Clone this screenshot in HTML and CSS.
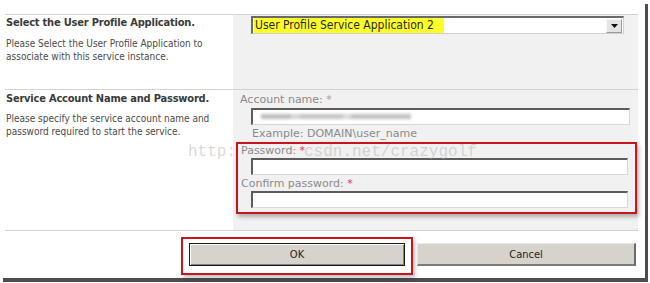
FILE: index.html
```html
<!DOCTYPE html>
<html>
<head>
<meta charset="utf-8">
<link rel="stylesheet" href="styles.css">
</head>
<body>
<div class="frame">
  <div class="top-space"></div>
  <div class="section s1">
    <div class="left">
      <div class="heading">Select the User Profile Application.</div>
      <div class="desc">Please Select the User Profile Application to<br>associate with this service instance.</div>
    </div>
    <div class="right">
      <div class="select">
        <span class="sel-text">User Profile Service Application 2</span>
        <span class="sel-btn"><svg width="7" height="4" viewBox="0 0 7 4"><path d="M0 0H7L3.5 4Z" fill="#111"/></svg></span>
      </div>
    </div>
  </div>
  <div class="section s2">
    <div class="left">
      <div class="heading">Service Account Name and Password.</div>
      <div class="desc">Please specify the service account name and<br>password required to start the service.</div>
    </div>
    <div class="right">
      <div class="label">Account name: <span class="star">*</span></div>
      <div class="input"><div class="blur"></div></div>
      <div class="example">Example: DOMAIN\user_name</div>
      <div class="redbox">
        <div class="label">Password: <span class="star red">*</span></div>
        <div class="input"></div>
        <div class="label l2">Confirm password: <span class="star red">*</span></div>
        <div class="input"></div>
      </div>
    </div>
  </div>
  <div class="buttons">
    <div class="okbox"><div class="btn ok">OK</div></div>
    <div class="btn cancel">Cancel</div>
  </div>
  <div class="watermark wm1">http:</div>
  <div class="watermark wm2">csdn.net/crazygolf</div>
</div>
</body>
</html>
```
FILE: styles.css
```css
html, body { margin: 0; padding: 0; background: #fff; }
body { width: 650px; height: 283px; overflow: hidden; font-family: "DejaVu Sans", Verdana, sans-serif; }
.frame {
  position: relative;
  width: 645px;
  height: 278px;
  background: #fff;
  box-shadow: 3px 4px 0 #4d4d4d;
  display: flex;
  flex-direction: column;
}
.top-space { height: 14px; }
.section {
  display: flex;
  margin: 0 7px 0 5px;
  border-top: 1px solid #d2d2d2;
}
.s1 { height: 74px; }
.s2 { height: 140px; border-bottom: 1px solid #d2d2d2; }
.left { width: 227px; padding-left: 1px; }
.right { flex: 1; background: #f1f1f1; }
.heading {
  font-family: "DejaVu Sans", sans-serif;
  font-stretch: condensed;
  font-weight: bold;
  font-size: 11px;
  letter-spacing: -0.2px;
  line-height: 14px;
  color: #3a3a3a;
  margin-top: 1px;
}
.desc {
  font-family: "DejaVu Sans", sans-serif;
  font-stretch: condensed;
  font-size: 10px;
  line-height: 13px;
  color: #4a4a4a;
  margin-top: 7px;
}
.s2 .heading { margin-top: 2px; }
.s2 .desc { margin-top: 6px; }
.select {
  margin: 1px 0 0 18px;
  width: 368px;
  height: 13px;
  padding: 1px;
  background: #fff;
  border-top: 2px solid #6a6a6a;
  border-left: 2px solid #6a6a6a;
  border-bottom: 1px solid #cfcfcf;
  border-right: 1px solid #cfcfcf;
  display: flex;
  align-items: center;
  justify-content: space-between;
}
.sel-text {
  background: #fdfd2c;
  color: #2a2a2a;
  font-family: "DejaVu Sans", sans-serif;
  font-stretch: condensed;
  font-size: 12px;
  line-height: 15px;
  padding: 0 10px 0 1px;
}
.sel-btn {
  width: 14px;
  height: 12px;
  background: #e4e4e4;
  border: 1px solid #9a9a9a;
  border-top-color: #f8f8f8;
  border-left-color: #f8f8f8;
  display: flex;
  align-items: center;
  justify-content: center;
}
.label {
  font-size: 11px;
  line-height: 14px;
  color: #8a8a8a;
  margin: 3px 0 0 7px;
}
.star { color: #a0a0a0; }
.star.red { color: #e23a3a; }
.input {
  margin: 1px 0 0 18px;
  width: 376px;
  height: 14px;
  background: #fff;
  border-top: 2px solid #5c5c5c;
  border-left: 2px solid #5c5c5c;
  border-right: 1px solid #d8d8d8;
  border-bottom: 1px solid #d8d8d8;
  overflow: hidden;
}
.blur {
  margin: 4px 0 0 8px;
  width: 150px;
  height: 5px;
  background: linear-gradient(90deg, #bdbdbd 0 20%, #d6d6d6 20% 26%, #c4c4c4 26% 55%, #dadada 55% 60%, #c0c0c0 60% 100%);
  filter: blur(1.5px);
}
.example {
  font-size: 11px;
  line-height: 14px;
  color: #8a8a8a;
  margin: 2px 0 0 19px;
}
.redbox {
  margin: 1px 1px 0 3px;
  height: 68px;
  border: 2px solid #c8151b;
  box-shadow: 2px 3px 4px rgba(0,0,0,0.28);
}
.redbox .label { margin: 0 0 0 3px; line-height: 13px; }
.redbox .input { margin-left: 13px; margin-top: 1px; width: 374px; }
.redbox .label.l2 { margin-top: 2px; }
.buttons {
  display: flex;
  align-items: flex-start;
  padding-left: 181px;
  margin-top: 6px;
}
.okbox {
  width: 222px;
  height: 30px;
  border: 2px solid #c8151b;
  padding: 4px 0 0 6px;
  box-shadow: 2px 3px 4px rgba(0,0,0,0.25);
  background: #fff;
}
.btn {
  font-family: "DejaVu Sans", sans-serif;
  font-stretch: condensed;
  font-size: 11px;
  color: #222;
  display: flex;
  align-items: center;
  justify-content: center;
  background: #d6d3cd;
}
.ok {
  width: 214px;
  height: 21px;
  border: 1px solid #1a1a1a;
  box-shadow: inset 1px 1px 0 #fff, inset -1px -1px 0 #808080;
}
.cancel {
  margin: 6px 0 0 4px;
  width: 216px;
  height: 20px;
  border-top: 1px solid #e8e8e8;
  border-left: 1px solid #e8e8e8;
  border-right: 2px solid #6a6a6a;
  border-bottom: 2px solid #7a7a7a;
}
.watermark {
  position: absolute;
  top: 143px;
  font-family: "Liberation Mono", monospace;
  font-size: 16px;
  line-height: 18px;
  color: rgba(170,170,170,0.45);
  pointer-events: none;
}
.wm1 { left: 188px; }
.wm2 { left: 304px; }
```
